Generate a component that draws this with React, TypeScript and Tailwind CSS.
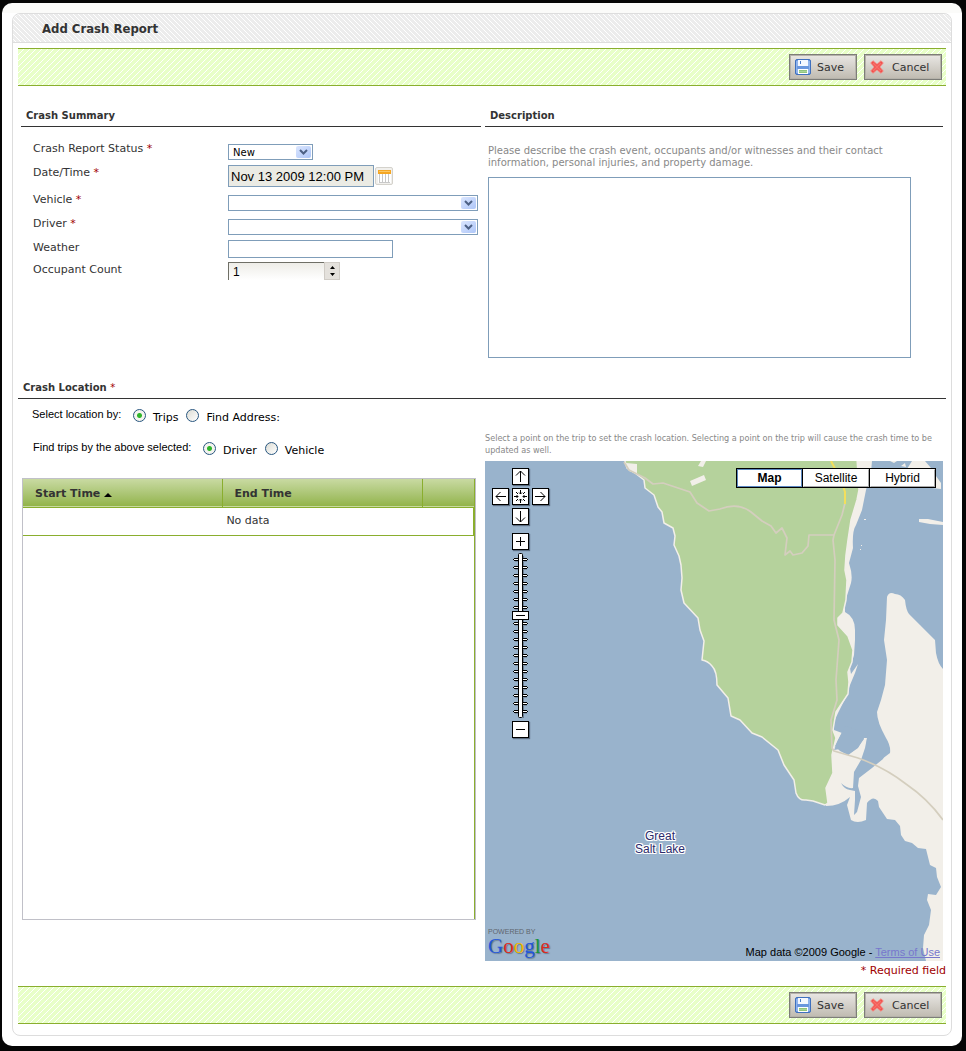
import React from "react";

function SaveIcon() {
  return (
    <svg width="16" height="16" viewBox="0 0 16 16" aria-hidden="true">
      <rect x="0.5" y="0.5" width="15" height="15" rx="1.5" fill="#6f9be0" stroke="#3f70bd" />
      <path d="M1 2h2v12H1zM13 2h2v12h-2z" fill="#8fb3ec" />
      <rect x="3" y="1" width="10" height="6" fill="#f4f8ff" />
      <rect x="5" y="2" width="1" height="3" fill="#4b7cc8" />
      <path d="M2 7h12v3H2z" fill="#6a97de" />
      <rect x="3" y="10" width="10" height="5" fill="#fff" />
      <path d="M4 11h8v3H4z" fill="#8fc47c" />
      <path d="M4 12h8v1H4z" fill="#a9d69a" />
    </svg>
  );
}

function CancelIcon() {
  return (
    <svg width="14" height="14" viewBox="0 0 14 14" aria-hidden="true">
      <path d="M3 0.700L7 4.200L11 0.700L13.300 3L9.800 7L13.300 11L11 13.300L7 9.800L3 13.300L0.700 11L4.200 7L0.700 3Z" fill="#f2504c" stroke="#f58a84" strokeWidth="0.800" />
      <path d="M3 3L11 11M11 3L3 11" stroke="#f7706a" strokeWidth="1.500" />
    </svg>
  );
}

function ActionBar() {
  const button =
    "flex h-[26px] items-center border border-[#7d7d78] bg-gradient-to-b from-[#e9e7e4] to-[#bfbab0] text-[11px] leading-4 text-[#333] shadow-[inset_0_0_0_1px_#b5b2aa]";
  return (
    <div className="flex h-[38px] items-center justify-end gap-[7px] border-y border-[#8aae2e] bg-[#e8ffc8] bg-[linear-gradient(135deg,transparent_46%,#fff_46%_54%,transparent_54%)] bg-[length:6px_6px] pr-1">
      <button type="button" className={`${button} w-[68px] gap-1.5 pl-[5px]`}>
        <SaveIcon />
        <span className="pt-0.5">Save</span>
      </button>
      <button type="button" className={`${button} w-[78px] gap-2 pl-[5px]`}>
        <CancelIcon />
        <span className="pt-0.5">Cancel</span>
      </button>
    </div>
  );
}

function Required() {
  return <span className="font-normal text-[#a00000]">*</span>;
}

function Row({ label, id, required, height, low, children }: {
  label: string;
  id: string;
  required?: boolean;
  height: string;
  low?: boolean;
  children: React.ReactNode;
}) {
  return (
    <div className={`flex items-start ${height}`}>
      <label htmlFor={id} className={`w-[195px] shrink-0 leading-[10px] ${low ? "pt-[3px]" : ""}`}>
        {label} {required && <Required />}
      </label>
      {children}
    </div>
  );
}

function Select({ id, width, options }: { id: string; width: string; options: string[] }) {
  return (
    <span className={`relative block ${width}`}>
      <select id={id} className="block h-4 w-full appearance-none border border-[#7f9db9] bg-white pl-1 pt-px text-[10px] leading-[13px] text-black outline-none">
        {options.map((o) => (
          <option key={o}>{o}</option>
        ))}
      </select>
      <span className="pointer-events-none absolute right-0.5 top-0.5 flex h-3 w-[15px] items-center justify-center rounded-xs bg-gradient-to-br from-[#dbe6fe] to-[#aec6f8]">
        <svg width="9" height="6" viewBox="0 0 9 6" aria-hidden="true">
          <path d="M1 1L4.500 4.500L8 1" fill="none" stroke="#4d6185" strokeWidth="2" />
        </svg>
      </span>
    </span>
  );
}

function Radio({ name, label, checked }: { name: string; label: string; checked?: boolean }) {
  return (
    <label className="flex items-center gap-[7px] text-black">
      <input
        type="radio"
        name={name}
        defaultChecked={checked}
        className="size-[13px] appearance-none rounded-full border border-[#28567f] bg-[linear-gradient(135deg,#dcdcd4,#fff)] checked:bg-[radial-gradient(circle,#2fb52b_0_2px,#f4f4ef_3px)]"
      />
      <span className="pt-1.5">{label}</span>
    </label>
  );
}

function MapButton({ label, path }: { label: string; path: string }) {
  return (
    <button type="button" aria-label={label} className="size-[17px] border border-black bg-white shadow-[1px_1px_1px_#5a6c80]">
      <svg width="15" height="15" viewBox="0 0 15 15" aria-hidden="true">
        <path d={path} fill="none" stroke="#000" strokeWidth="1" />
      </svg>
    </button>
  );
}

function Terrain() {
  return (
    <svg className="absolute inset-0 h-full w-full" viewBox="485 461 458 500" preserveAspectRatio="xMidYMid slice" role="img" aria-label="Great Salt Lake">
      <rect x="0" y="0" width="1600" height="1600" fill="#99b3cc" />
      <path
        fill="#f2efe9"
        d="M872 461L871 472L866 490L862 510L856 525Q852 531 853 548L849 563Q853 575 851 583L845 602V612Q855 617 855 630V640L854 655L850 668L851 674L858 664L855 673L850 685L846 697L838 713L834 722V730L842 733L838 740L834 748L820 748V461Z"
      />
      <path
        fill="#f2efe9"
        d="M943 669Q938 664 936 653L935 640L920 625L909 614Q906 610 905 600Q901 594 895 594Q889 591 887 597L886 620L884 640L887 660L885 685L881 700L877 712Q877 722 886 738Q891 746 890 753L882 759L864 773L867 738L864 738L858 748L848 755L840 751L835 746L830 757L826 788L826 806Q840 806 850 797L847 805L851 820Q857 824 866 820L867 803Q873 795 878 801L879 807L887 819L895 820L900 826L901 835L905 841L912 843L918 848L926 849L930 865L936 868L937 877L941 887L936 895L928 894L927 900L931 910L929 925L924 935L923 948L926 961H943Z"
      />
      <path
        fill="#99b3cc"
        d="M867 738L865 748L861 760L854 772L853 788Q847 789 841 783Q844 789 850 790L855 791L855 800L854 815L857 812L861 797L858 786L859 778L872 768L883 759L886 752L872 738Z"
      />
      <path fill="#99b3cc" d="M838 740L834 750L840 749L848 755L858 747L864 739L858 730L845 726Z" />
      <path
        fill="#b5d29c"
        stroke="#f2efe9"
        strokeWidth="1.500"
        strokeLinejoin="round"
        d="M624 458L627 468L635 473L644 480L645 488L654 495L658 507L662 512L664 523L673 528L675 536L674 545L679 556L681 565L682 578L681 590L684 603L698 618L700 630L704 641L702 660Q708 661 712 666Q717 671 717 685L728 698L731 716L740 720L752 733L762 737L778 750L784 765L794 780L796 793Q799 801 806 800L813 801L825 805L828 803L826 788L833 773L832 755L836 738L833 730L836 712L848 694L849 682L848 672L852 662L853 650L848 636L838 625V618L843 613L846 600L847 580L845 570L846 555L848 540L851 520L857 500L859 490L857 458Z"
      />
      <g fill="#f2efe9">
        <path d="M626 463L637 464V474L629 471ZM690 481L704 475L706 480L692 486ZM701 461H706L703 467L698 466Z" />
        <path d="M912 461H925L931 468L936 476L941 483V489L932 488L920 483L907 469ZM890 461H897L894 463ZM919 519L928 519L943 522V525L930 524L919 522Z" />
        <path d="M864 519h2v1h-2zM861 545h1v1h-1zM860 549h1v1h-1zM901 466l4 -3l1 4z" />
      </g>
      <g fill="none" stroke="#d4cebe" strokeWidth="1.700" strokeLinejoin="round">
        <path d="M624 462L629 470L645 478L653 484L663 483L690 492L697 503L709 511L720 509Q738 502 751 512L762 521L771 526L776 533L782 528L787 538L785 555L790 551L793 555L802 553L808 546L809 535H834L842 515L845 503" />
        <path d="M834 535L833 540L835 560L834 620L839 640L836 680L837 700L831 720L832 748L834 751L858 758Q884 767 906 784Q928 799 943 820" />
      </g>
      <path d="M831 461L841 480L845 492V504" fill="none" stroke="#f3df5c" strokeWidth="2" />
    </svg>
  );
}

function ZoomSlider() {
  const ticks = Array.from({ length: 20 }, (_, i) => 5 + i * 8);
  return (
    <div className="relative">
      <svg width="17" height="168" viewBox="0 0 17 168" aria-hidden="true">
        <path d="M11.500 3V165" stroke="#6a7d92" />
        {ticks.map((y) => (
          <g key={y}>
            <path d={`M3 ${y + 3.5}H15`} stroke="#7c90a6" strokeWidth="1" />
            <path d={`M2 ${y + 0.5}H15M2 ${y + 2.5}H15M1.500 ${y + 1}V${y + 2}M15.500 ${y + 1}V${y + 2}`} stroke="#000" strokeWidth="1" />
            <path d={`M2 ${y + 1.5}H15`} stroke="#fff" strokeWidth="1" />
          </g>
        ))}
        <rect x="6.500" y="0.500" width="4" height="164" rx="1" fill="#fff" stroke="#000" />
        <rect x="0.500" y="58.500" width="16" height="8" fill="#fff" stroke="#000" />
        <path d="M4 62.500H13" stroke="#000" />
      </svg>
      <input type="range" aria-label="Zoom level" min={0} max={19} defaultValue={12} className="absolute inset-0 h-full w-full opacity-0" />
    </div>
  );
}

function CrashMap() {
  return (
    <div className="relative h-[500px] overflow-hidden bg-[#99b3cc] font-['Liberation_Sans',sans-serif]">
      <Terrain />
      <div className="absolute left-[7px] top-[7px] flex flex-col items-center">
        <div className="grid grid-cols-3 gap-[3px]">
          <span />
          <MapButton label="Pan up" path="M7.500 2V13M3 6.500L7.500 2L12 6.500" />
          <span />
          <MapButton label="Pan left" path="M3 7.500H13M7.500 3L3 7.500L7.500 12" />
          <MapButton label="Return to last result" path="M7.500 1V5M7.500 10V14M1 7.500H5M10 7.500H14M6 3.500L7.500 5L9 3.500M6 11.500L7.500 10L9 11.500M3.500 6L5 7.500L3.500 9M11.500 6L10 7.500L11.500 9M3 3L5 5M12 3L10 5M3 12L5 10M12 12L10 10" />
          <MapButton label="Pan right" path="M2 7.500H12M7.500 3L12 7.500L7.500 12" />
          <span />
          <MapButton label="Pan down" path="M7.500 2V13M3 8.500L7.500 13L12 8.500" />
          <span />
        </div>
        <div className="flex flex-col items-center pt-2">
          <MapButton label="Zoom in" path="M3 7.500H12M7.500 3V12" />
          <div className="pt-[3px]">
            <ZoomSlider />
          </div>
          <MapButton label="Zoom out" path="M3 7.500H12" />
        </div>
      </div>
      <div className="absolute right-[7px] top-[7px] flex border border-black bg-black text-xs leading-[15px] text-black">
        <button type="button" className="w-[65px] border border-[#5c88c0] bg-white pt-px font-bold">Map</button>
        <button type="button" className="ml-px w-[66px] border border-b-[#aaa] border-l-white border-r-[#aaa] border-t-white bg-white pt-px">Satellite</button>
        <button type="button" className="ml-px w-[65px] border border-b-[#aaa] border-l-white border-r-[#aaa] border-t-white bg-white pt-px">Hybrid</button>
      </div>
      <div className="absolute left-[150px] top-[369px] text-center text-xs leading-[13px] text-[#2b2b6b] [text-shadow:1px_0_#fff,-1px_0_#fff,0_1px_#fff,0_-1px_#fff,1px_1px_#fff,-1px_-1px_#fff,1px_-1px_#fff,-1px_1px_#fff]">
        Great
        <br />
        Salt Lake
      </div>
      <div className="absolute bottom-[5px] left-[3px]">
        <div className="text-[7px] leading-2 text-[#5f666e]">POWERED BY</div>
        <div className="font-['Liberation_Serif',serif] text-[21px] leading-5 [text-shadow:1px_1px_1px_#66788c]">
          <span className="text-[#2255d8]">G</span>
          <span className="text-[#dc2a1e]">o</span>
          <span className="text-[#f0b800]">o</span>
          <span className="text-[#2255d8]">g</span>
          <span className="text-[#18953c]">l</span>
          <span className="text-[#dc2a1e]">e</span>
        </div>
      </div>
      <div className="absolute bottom-0.5 right-[3px] text-[11px] leading-[14px] text-black">
        Map data ©2009 Google -{" "}
        <a href="#terms" className="text-[#7777cc] underline">Terms of Use</a>
      </div>
    </div>
  );
}

export default function App() {
  const heading = "border-b border-[#333] text-[10px] font-bold leading-3 pt-px pb-1 pl-[5px]";
  return (
    <div className="bg-[#050505] pb-[5px] pl-0.5 pr-1 pt-[3px] font-['DejaVu_Sans',sans-serif] text-[11px] leading-4 text-[#333]">
      <div className="rounded-[10px] bg-white bg-[linear-gradient(#fbfbf9_10px,transparent_10px)] px-2.5 pb-2.5 pt-2.5">
        <main className="rounded-lg border border-[#ddd] bg-white">
          <h1 className="h-[29px] rounded-t-lg border-b border-[#ddd] bg-[#ececec] bg-[linear-gradient(45deg,transparent_46%,#fff_46%_54%,transparent_54%)] bg-[length:5px_5px] pl-[29px] font-['DejaVu_Sans_Condensed','DejaVu_Sans',sans-serif] text-[13px] font-bold leading-[29px]">
            Add Crash Report
          </h1>
          <form className="px-[5px] pb-[11px] pt-[5px]" onSubmit={(e) => e.preventDefault()}>
            <ActionBar />
            <div className="grid grid-cols-[460px_1fr] gap-1 pl-[3px] pr-[3px] pt-[23px]">
              <section>
                <h2 className={heading}>Crash Summary</h2>
                <div className="pl-3 pt-[17px]">
                  <Row label="Crash Report Status" id="status" required height="h-[21px]">
                    <Select id="status" width="w-[85px]" options={["New", "Closed"]} />
                  </Row>
                  <Row label="Date/Time" id="date" required height="h-[30px]" low>
                    <input id="date" readOnly defaultValue="Nov 13 2009 12:00 PM" className="h-[22px] w-[146px] border border-[#7f9db9] bg-[#ebebe4] px-0.5 font-['Liberation_Sans',sans-serif] text-[13px] text-black outline-none" />
                    <button type="button" aria-label="Pick a date" className="ml-px mt-0.5 flex size-[18px] items-center justify-center rounded-xs border border-[#d4d2cc] bg-[#f1f0ed]">
                      <svg width="13" height="13" viewBox="0 0 13 13" aria-hidden="true">
                        <rect x="0" y="0" width="13" height="13" fill="#fff" />
                        <path d="M0 0h13v4H0z" fill="#f5a623" />
                        <path d="M1 1h11v1H1z" fill="#fbc765" />
                        <path d="M1.500 4v8M4.500 4v8M7.500 4v8M10.500 4v8M1 12.500h11" stroke="#c8c8c8" />
                      </svg>
                    </button>
                  </Row>
                  <Row label="Vehicle" id="vehicle" required height="h-6">
                    <Select id="vehicle" width="w-[250px]" options={[""]} />
                  </Row>
                  <Row label="Driver" id="driver" required height="h-[21px]">
                    <Select id="driver" width="w-[250px]" options={[""]} />
                  </Row>
                  <Row label="Weather" id="weather" height="h-[22px]" low>
                    <input id="weather" className="h-[18px] w-[165px] border border-[#7f9db9] bg-white px-1 outline-none" />
                  </Row>
                  <Row label="Occupant Count" id="occupants" height="h-[18px]" low>
                    <span className="flex h-[18px] w-28">
                      <input id="occupants" defaultValue="1" className="w-24 border-l border-t border-[#6f6f66] bg-gradient-to-b from-[#eeede8] to-white pl-1 font-['Liberation_Sans',sans-serif] text-xs text-black outline-none" />
                      <button type="button" aria-label="Change occupant count" className="flex w-4 items-center justify-center border border-[#d0ccc6] bg-[#e4e1dc]">
                        <svg width="5" height="10" viewBox="0 0 5 10" aria-hidden="true">
                          <path d="M0 3L2.500 0L5 3ZM0 7L2.500 10L5 7Z" fill="#000" />
                        </svg>
                      </button>
                    </span>
                  </Row>
                </div>
              </section>
              <section>
                <h2 className={heading}>Description</h2>
                <label htmlFor="description" className="block pl-[3px] pr-4 pt-[18px] text-[10px] leading-3 text-[#888]">
                  Please describe the crash event, occupants and/or witnesses and their contact information, personal injuries, and property damage.
                </label>
                <textarea id="description" className="ml-[3px] mt-2 block h-[181px] w-[423px] resize-none border border-[#7f9db9] bg-white p-1 outline-none" />
              </section>
            </div>
            <h2 className={`${heading} mt-[23px]`}>
              Crash Location <Required />
            </h2>
            <div className="flex pl-1 pr-[3px]">
              <section className="w-[454px] shrink-0">
                <fieldset className="flex items-start pl-2.5 pt-[5px]">
                  <legend className="float-left w-[101px] pt-1 font-['Liberation_Sans',sans-serif] leading-3 text-black">Select location by:</legend>
                  <div className="flex gap-2">
                    <Radio name="location" label="Trips" checked />
                    <Radio name="location" label="Find Address:" />
                  </div>
                </fieldset>
                <fieldset className="flex items-start pl-[11px] pt-[11px]">
                  <legend className="float-left w-[170px] pt-1 font-['Liberation_Sans',sans-serif] leading-3 text-black">Find trips by the above selected:</legend>
                  <div className="flex gap-2">
                    <Radio name="trips" label="Driver" checked />
                    <Radio name="trips" label="Vehicle" />
                  </div>
                </fieldset>
                <div className="mt-[19px] h-[442px] border border-[#c0c0c8]">
                  <div className="h-full border-r border-[#8aae2e]">
                    <table className="w-full table-fixed border-collapse text-left">
                      <thead>
                        <tr className="h-7 border-b border-[#8aae2e] bg-gradient-to-b from-[#c9daa2] to-[#93b44a]">
                          <th className="w-[199px] border-r border-[#8aae2e] pl-3 pt-0.5 font-bold">
                            Start Time <span className="inline-block border-x-4 border-b-4 border-x-transparent border-b-black" />
                          </th>
                          <th className="w-[200px] border-r border-[#8aae2e] pl-3 pt-0.5 font-bold">End Time</th>
                          <th aria-label="Actions" />
                        </tr>
                      </thead>
                      <tbody>
                        <tr className="h-7 border-b border-[#8aae2e]">
                          <td colSpan={3} className="border-r border-[#8aae2e] text-center">No data</td>
                        </tr>
                      </tbody>
                    </table>
                  </div>
                </div>
              </section>
              <section className="ml-[9px] min-w-0 flex-1 pt-[33px]">
                <p className="pb-[5px] font-['DejaVu_Sans_Condensed','DejaVu_Sans',sans-serif] text-[9px] leading-3 text-[#888]">
                  Select a point on the trip to set the crash location. Selecting a point on the trip will cause the crash time to be updated as well.
                </p>
                <CrashMap />
              </section>
            </div>
            <p className="pb-[9px] pt-[3px] text-right leading-[13px] text-[#a00000]">* Required field</p>
            <ActionBar />
          </form>
        </main>
      </div>
    </div>
  );
}
